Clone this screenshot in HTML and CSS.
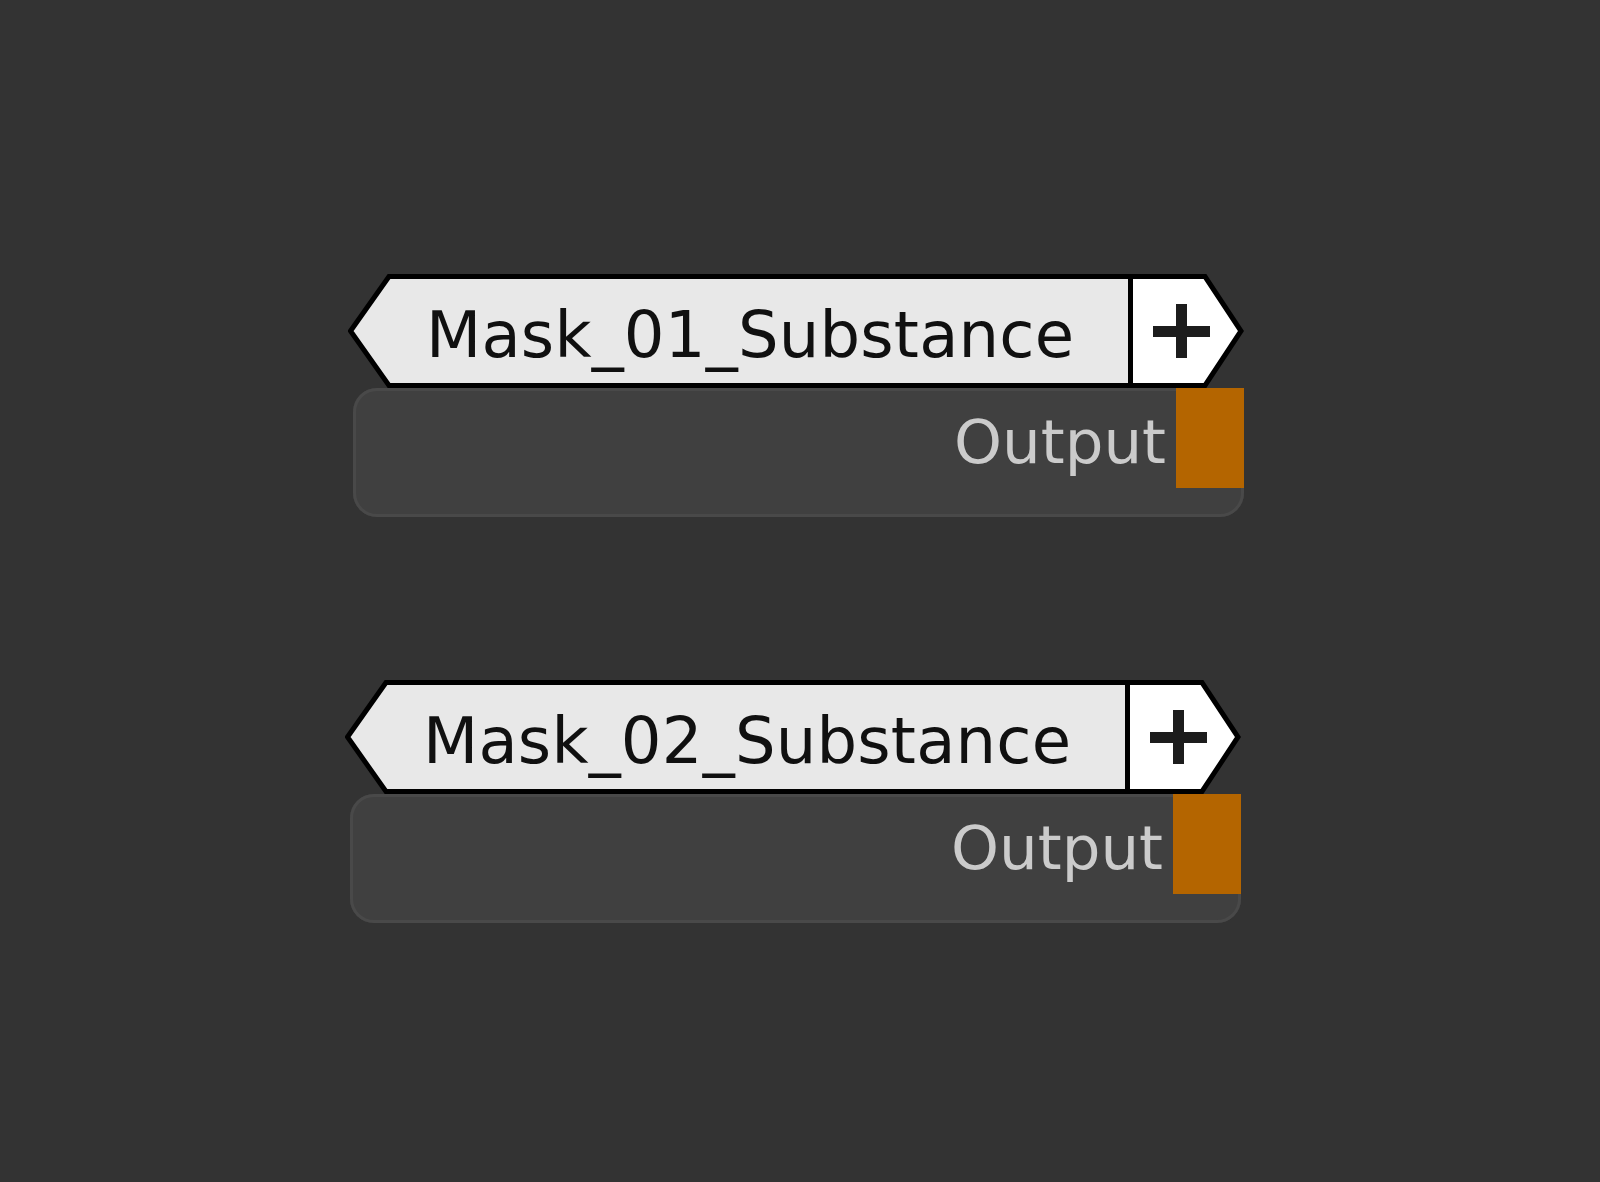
FILE: index.html
```html
<!DOCTYPE html>
<html lang="en">
<head>
  <meta charset="UTF-8">
  <title>Graph – Masks</title>
  <meta name="viewport" content="width=device-width, initial-scale=1.0">
  <link rel="stylesheet" href="styles.css">
</head>
<body>
  <div class="graph">

    <div class="node node-a">
      <div class="node-head">
        <svg class="head-shape" viewBox="0 0 896 114" width="896" height="114">
          <polygon class="title-fill" points="2,57 41,2 783,2 783,112 41,112"/>
          <polygon class="add-fill" points="783,2 857,2 893,57 857,112 783,112"/>
          <line class="divider" x1="782.5" y1="0" x2="782.5" y2="114"/>
          <polygon class="outline" points="2.5,57 41,2.5 857,2.5 893,57 857,111.5 41,111.5"/>
        </svg>
        <span class="node-title">Mask_01_Substance</span>
        <span class="node-add">
          <svg viewBox="0 0 57 54" width="57" height="54"><rect x="0" y="22" width="57" height="11"/><rect x="23" y="0" width="11" height="54"/></svg>
        </span>
      </div>
      <div class="node-body">
        <span class="port-label">Output</span>
        <span class="port"></span>
      </div>
    </div>

    <div class="node node-b">
      <div class="node-head">
        <svg class="head-shape" viewBox="0 0 896 114" width="896" height="114">
          <polygon class="title-fill" points="2,57 41,2 783,2 783,112 41,112"/>
          <polygon class="add-fill" points="783,2 857,2 893,57 857,112 783,112"/>
          <line class="divider" x1="782.5" y1="0" x2="782.5" y2="114"/>
          <polygon class="outline" points="2.5,57 41,2.5 857,2.5 893,57 857,111.5 41,111.5"/>
        </svg>
        <span class="node-title">Mask_02_Substance</span>
        <span class="node-add">
          <svg viewBox="0 0 57 54" width="57" height="54"><rect x="0" y="22" width="57" height="11"/><rect x="23" y="0" width="11" height="54"/></svg>
        </span>
      </div>
      <div class="node-body">
        <span class="port-label">Output</span>
        <span class="port"></span>
      </div>
    </div>

  </div>
</body>
</html>
```

FILE: styles.css
```css
html, body { margin: 0; height: 100%; }
body { background: #333333; font-family: "DejaVu Sans", Verdana, sans-serif; overflow: hidden; }

.graph { position: relative; width: 100%; height: 100%; }

/* nodes sit on the graph canvas at their own coordinates */
.node { position: absolute; width: 896px; }
.node-a { left: 348px; top: 274px; }
.node-b { left: 345px; top: 680px; }

.node-head { position: relative; display: flex; height: 114px; }
.head-shape { position: absolute; left: 0; top: 0; }
.head-shape .title-fill { fill: #e8e8e8; }
.head-shape .add-fill { fill: #ffffff; }
.head-shape .divider { stroke: #000; stroke-width: 5; }
.head-shape .outline { fill: none; stroke: #000; stroke-width: 5; stroke-linejoin: miter; }

.node-title { position: relative; flex: none; width: 783px; box-sizing: border-box; padding: 8px 0 0 78px; font-size: 64px; letter-spacing: 0.2px; line-height: 106px; color: #101010; white-space: nowrap; }
.node-add { position: relative; flex: 1; display: flex; align-items: center; justify-content: center; padding-right: 12px; }
.node-add svg { fill: #1c1c1c; }

.node-body { display: flex; justify-content: flex-end; align-items: flex-start; margin-left: 5px; height: 129px; background: #404040; border-radius: 24px; box-shadow: inset 0 0 0 3px #494949; }
.port-label { font-size: 61px; line-height: 108px; color: #cbcbcb; margin-right: 10px; }
.port { width: 68px; height: 100px; background: #b46500; }
```
